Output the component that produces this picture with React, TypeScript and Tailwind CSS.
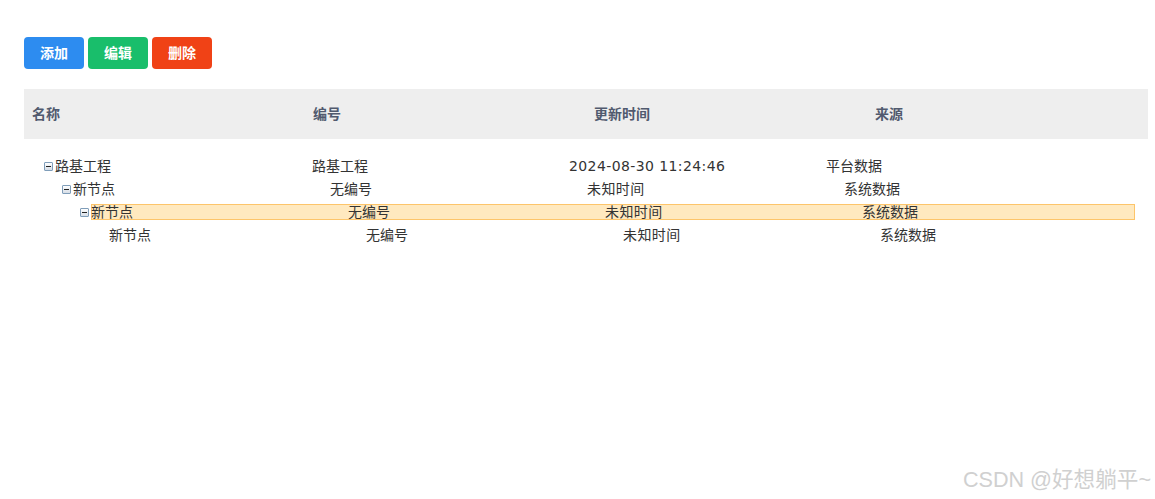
import React from "react";

type Node = {
  name: string;
  code: string;
  time: string;
  source: string;
  level: number;
  open?: boolean;
  leaf?: boolean;
  selected?: boolean;
};

const rows: Node[] = [
  { name: "路基工程", code: "路基工程", time: "2024-08-30 11:24:46", source: "平台数据", level: 0, open: true },
  { name: "新节点", code: "无编号", time: "未知时间", source: "系统数据", level: 1, open: true },
  { name: "新节点", code: "无编号", time: "未知时间", source: "系统数据", level: 2, open: true, selected: true },
  { name: "新节点", code: "无编号", time: "未知时间", source: "系统数据", level: 3, leaf: true },
];

const indents = ["pl-[20px]", "pl-[38px]", "pl-[56px]", "pl-[74px]"];

function Toggle() {
  return (
    <span className="mr-[2px] flex h-[9px] w-[9px] flex-none items-center justify-center rounded-[1px] border border-[#7f9db9] bg-gradient-to-b from-white to-[#d6dde6]">
      <span className="h-px w-[5px] bg-[#222]" />
    </span>
  );
}

function TreeRow({ node }: { node: Node }) {
  return (
    <div className={`flex h-[23px] items-start ${indents[node.level]}`}>
      <div className="flex h-[16px] items-center">
        {node.leaf ? <span className="mr-[2px] w-[9px] flex-none" /> : <Toggle />}
        <div
          className={`flex h-[16px] items-center whitespace-nowrap ${
            node.selected ? "border border-[#fdc56a] bg-[#ffe9bf]" : "border border-transparent"
          }`}
        >
          <span className="w-[257px] -ml-px">{node.name}</span>
          <span className="w-[257px]">{node.code}</span>
          <span className="w-[257px] tracking-[0.4px]">{node.time}</span>
          <span className="w-[272px]">{node.source}</span>
        </div>
      </div>
    </div>
  );
}

export default function App() {
  return (
    <div className="relative h-[499px] w-full overflow-hidden bg-white pl-[24px] pr-[7px] pt-[37px] font-['DejaVu_Sans','Noto_Sans_CJK_SC',sans-serif] text-[14px] text-[#333]">
      <div className="flex gap-[4px]">
        <button className="h-[32px] w-[60px] rounded-[4px] bg-[#2d8cf0] text-[14px] font-bold text-white">添加</button>
        <button className="h-[32px] w-[60px] rounded-[4px] bg-[#19be6b] text-[14px] font-bold text-white">编辑</button>
        <button className="h-[32px] w-[60px] rounded-[4px] bg-[#f04216] text-[14px] font-bold text-white">删除</button>
      </div>
      <div className="mt-[20px] grid h-[50px] grid-cols-4 items-center bg-[#eeeeee] text-[14px] font-bold text-[#515a6e]">
        <span className="pl-[8px]">名称</span>
        <span className="pl-[8px]">编号</span>
        <span className="pl-[8px]">更新时间</span>
        <span className="pl-[8px]">来源</span>
      </div>
      <div className="pt-[19px] leading-[16px]">
        {rows.map((r, i) => (
          <TreeRow key={i} node={r} />
        ))}
      </div>
      <div className="absolute bottom-[7px] right-[4px] font-['Liberation_Sans','Noto_Sans_CJK_SC',sans-serif] text-[21.6px] leading-[24px] text-[#d0d0d0]">
        CSDN @好想躺平~
      </div>
    </div>
  );
}
